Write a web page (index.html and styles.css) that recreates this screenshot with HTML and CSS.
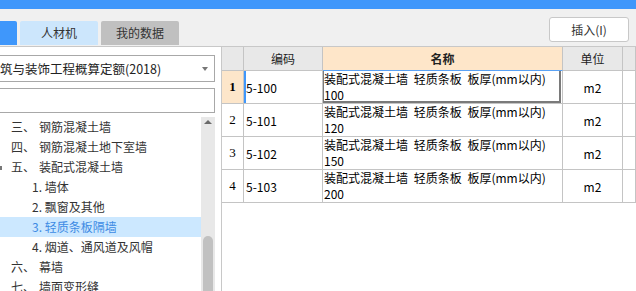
FILE: index.html
```html
<!DOCTYPE html>
<html lang="zh-CN">
<head>
  <meta charset="UTF-8" />
  <title>人材机</title>
  <link rel="stylesheet" href="styles.css">
</head>
<body>

  <div class="topbar"></div>

  <div class="toolbar">
    <div class="tab tab-blue"></div>
    <div class="tab tab-active">人材机</div>
    <div class="tab tab-gray">我的数据</div>
    <button class="btn-insert">插入(I)</button>
  </div>

  <div class="main">
    <div class="side">
      <div class="select">
        <span class="select-text">筑与装饰工程概算定额(2018)</span>
        <i class="caret"></i>
      </div>
      <div class="search"></div>
      <div class="tree-wrap">
        <ul class="tree">
          <li><span class="num">三、</span>钢筋混凝土墙</li>
          <li><span class="num">四、</span>钢筋混凝土地下室墙</li>
          <li class="folded"><span class="num">五、</span>装配式混凝土墙</li>
          <li class="sub">1. 墙体</li>
          <li class="sub">2. 飘窗及其他</li>
          <li class="sub active">3. 轻质条板隔墙</li>
          <li class="sub">4. 烟道、通风道及风帽</li>
          <li><span class="num">六、</span>幕墙</li>
          <li><span class="num">七、</span>墙面变形缝</li>
        </ul>
        <div class="scrollbar">
          <i class="arrow-up"></i>
          <div class="thumb"></div>
        </div>
      </div>
    </div>

    <div class="grid">
      <div class="grid-row head">
        <div class="cell"></div>
        <div class="cell">编码</div>
        <div class="cell name-head">名称</div>
        <div class="cell">单位</div>
        <div class="cell"></div>
      </div>
      <div class="grid-row">
        <div class="cell rownum current">1</div>
        <div class="cell code current-code">5-100</div>
        <div class="cell name sel">
          <div>装配式混凝土墙 轻质条板 板厚(mm以内)</div>
          <div>100</div>
        </div>
        <div class="cell unit">m2</div>
        <div class="cell"></div>
      </div>
      <div class="grid-row">
        <div class="cell rownum">2</div>
        <div class="cell code">5-101</div>
        <div class="cell name">
          <div>装配式混凝土墙 轻质条板 板厚(mm以内)</div>
          <div>120</div>
        </div>
        <div class="cell unit">m2</div>
        <div class="cell"></div>
      </div>
      <div class="grid-row">
        <div class="cell rownum">3</div>
        <div class="cell code">5-102</div>
        <div class="cell name">
          <div>装配式混凝土墙 轻质条板 板厚(mm以内)</div>
          <div>150</div>
        </div>
        <div class="cell unit">m2</div>
        <div class="cell"></div>
      </div>
      <div class="grid-row">
        <div class="cell rownum">4</div>
        <div class="cell code">5-103</div>
        <div class="cell name">
          <div>装配式混凝土墙 轻质条板 板厚(mm以内)</div>
          <div>200</div>
        </div>
        <div class="cell unit">m2</div>
        <div class="cell"></div>
      </div>
    </div>
  </div>

</body>
</html>
```

FILE: styles.css
```css
* {
  box-sizing: border-box;
}

body {
  margin: 0;
  height: 291px;
  overflow: hidden;
  background-color: #f0f0f0;
  font-family: "Noto Sans CJK SC", "Microsoft YaHei", sans-serif;
  font-size: 12px;
  color: #333;
}

.topbar {
  height: 9px;
  background-color: #3f97fb;
}

/* tabs + insert button */
.toolbar {
  display: flex;
  align-items: flex-end;
  gap: 3px;
  height: 38px;
  border-bottom: 1px solid #c8c8c8;
}

.tab {
  width: 78px;
  height: 24px;
  margin-bottom: 1px;
  border-radius: 2px 2px 0 0;
  text-align: center;
  line-height: 24px;
  font-size: 12px;
  color: #333;
}

.tab-blue {
  margin-left: -61px;
  background-color: #3f97fb;
}

.tab-active {
  background-color: #cce6fc;
}

.tab-gray {
  background-color: #c0c0c0;
}

.btn-insert {
  align-self: flex-start;
  margin: 8px 7px 0 auto;
  width: 80px;
  height: 25px;
  padding: 0;
  background: white;
  border: 1px solid #c8c8c8;
  border-radius: 3px;
  font-family: inherit;
  font-size: 12px;
  color: #333;
}

.main {
  display: flex;
  height: 244px;
}

/* left tree panel */
.side {
  display: flex;
  flex-direction: column;
  width: 221px;
  background: white;
}

.select,
.search {
  width: 216px;
  margin-left: -1px;
  border: 1px solid #a8a8a8;
  background: white;
}

.select {
  display: flex;
  align-items: center;
  justify-content: space-between;
  height: 27px;
  margin-top: 8px;
  padding: 0 6px 0 0;
  font-size: 12.5px;
  color: #222;
  overflow: hidden;
  white-space: nowrap;
}

.caret {
  width: 0;
  height: 0;
  border-left: 3px solid transparent;
  border-right: 3px solid transparent;
  border-top: 4px solid #777;
}

.search {
  height: 25px;
  margin-top: 6px;
}

.tree-wrap {
  display: flex;
  flex: 1;
  width: 216px;
  margin: 4px 0 0 -1px;
  min-height: 0;
  overflow: hidden;
}

.tree {
  flex: 1;
  margin: 0;
  padding: 0;
  list-style: none;
}

.tree li {
  position: relative;
  height: 20px;
  line-height: 20px;
  padding-left: 12px;
  white-space: nowrap;
  color: #333;
}

.tree .num {
  display: inline-block;
  width: 28px;
}

.tree .sub {
  padding-left: 33px;
}

.tree .active {
  background-color: #cce8ff;
  color: #3d8be4;
}

.tree .folded::before {
  content: "";
  position: absolute;
  left: 1px;
  top: 9px;
  width: 2px;
  height: 4px;
  background: #777;
}

.scrollbar {
  width: 14px;
  background-color: #e8e8e8;
  display: flex;
  flex-direction: column;
  align-items: center;
}

.arrow-up {
  margin-top: 3px;
  width: 0;
  height: 0;
  border-left: 4px solid transparent;
  border-right: 4px solid transparent;
  border-bottom: 4px solid #6a6a6a;
}

.thumb {
  width: 10px;
  margin-top: 112px;
  flex: 1;
  background-color: #c1c1c1;
  border-radius: 5px 5px 0 0;
}

/* right grid */
.grid {
  flex: 1;
  border-left: 1px solid #c8c8c8;
  background: white;
  color: #000;
}

.grid-row {
  display: grid;
  grid-template-columns: 22px 79px 240px 60px 1fr;
  height: 33px;
}

.grid-row.head {
  height: 24px;
  background-color: #e8e8e8;
  text-align: center;
  line-height: 23px;
  color: #222;
}

.cell {
  border-right: 1px solid #c4c4c4;
  border-bottom: 1px solid #c4c4c4;
  overflow: hidden;
  white-space: nowrap;
}

.head .name-head {
  background-color: #fee6c9;
  border-bottom-color: #5aa2f5;
  font-weight: bold;
}

.rownum {
  display: flex;
  align-items: center;
  justify-content: center;
  font-family: "Liberation Serif", serif;
  font-size: 13px;
}

.rownum.current {
  background-color: #fde6ca;
  font-weight: bold;
}

.code {
  display: flex;
  align-items: center;
  padding-left: 2px;
}

.current-code {
  box-shadow: inset 2px 0 0 #3f97fb;
}

.name {
  padding: 0 0 0 1px;
  line-height: 16px;
  word-spacing: 3px;
}

.sel {
  position: relative;
}

.sel::after {
  content: "";
  position: absolute;
  left: -1px;
  top: 0;
  right: 1px;
  bottom: 0;
  border: 2px solid #7a7a7a;
  border-top: 0;
}

.unit {
  display: flex;
  align-items: center;
  justify-content: center;
}
```
